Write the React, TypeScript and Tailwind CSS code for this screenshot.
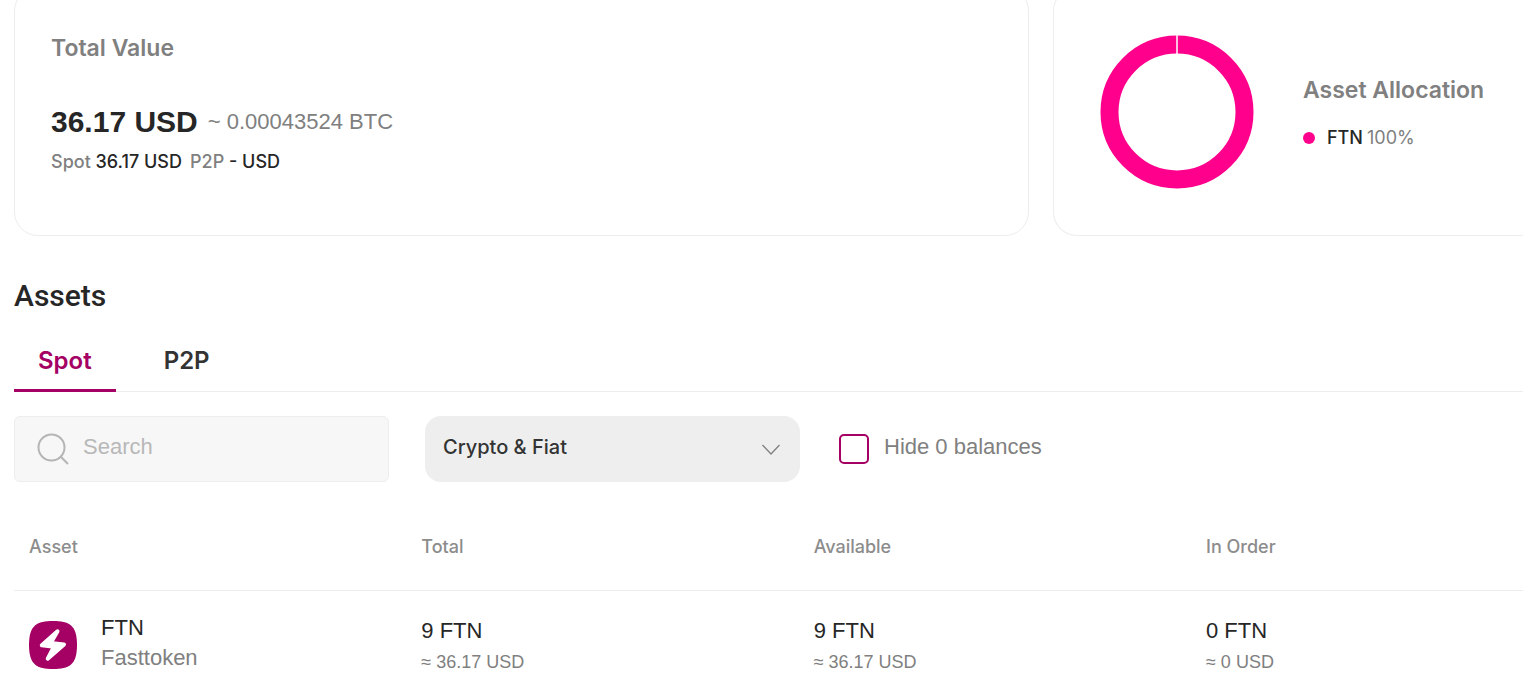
import { useState } from "react";

const BALANCES = [
  {
    symbol: "FTN",
    name: "Fasttoken",
    total: ["9 FTN", "≈ 36.17 USD"],
    available: ["9 FTN", "≈ 36.17 USD"],
    inOrder: ["0 FTN", "≈ 0 USD"],
  },
];

const TABS = ["Spot", "P2P"];

function DonutChart() {
  return (
    <svg viewBox="0 0 154 154" className="h-[154px] w-[154px] shrink-0" aria-hidden="true">
      <circle cx="77" cy="77" r="67.5" fill="none" stroke="#ff008c" strokeWidth="18" />
      <path d="M77 0v19" stroke="#ffffff" strokeWidth="1.5" />
    </svg>
  );
}

function FasttokenIcon() {
  return (
    <svg viewBox="0 0 48 48" className="h-12 w-12 shrink-0" aria-hidden="true">
      <path
        d="M24 0C40 0 48 4 48 24S40 48 24 48 0 44 0 24 8 0 24 0Z"
        fill="#a50064"
      />
      <path
        d="M28.5 10.3 L12.8 24.3 L25 25.8 L18.7 37.8 L35 23.4 L21.8 22 Z"
        fill="#fff"
        stroke="#fff"
        strokeWidth="4"
        strokeLinejoin="round"
      />
    </svg>
  );
}

function SearchIcon() {
  return (
    <svg viewBox="0 0 32 32" className="h-8 w-8 shrink-0" fill="none" stroke="#b5b5b5" strokeWidth="2" aria-hidden="true">
      <circle cx="14.5" cy="14.5" r="13" />
      <path d="m24 24 7 7" />
    </svg>
  );
}

function Amount({ value }: { value: string[] }) {
  return (
    <td className="px-[15px] pt-[25px] align-top">
      <div className="text-[22px] leading-[30px] text-[#262626]">{value[0]}</div>
      <div className="text-[18px] leading-8 text-[#808080]">{value[1]}</div>
    </td>
  );
}

export default function App() {
  const [tab, setTab] = useState("Spot");
  const [hideZero, setHideZero] = useState(false);

  return (
    <div className="overflow-hidden bg-white pl-3.5 font-['Liberation_Sans',Arial,sans-serif] text-[#262626]">
      {/* Summary cards */}
      <div className="-mt-[13px] flex gap-6">
        <section className="w-[1015px] max-w-[68%] shrink-0 rounded-3xl border border-[#ededed] px-9 pt-11 pb-[61px]">
          <h2 className="font-['Inter',sans-serif] text-[23px] leading-8 font-semibold text-[#808080]">Total Value</h2>
          <div className="mt-[38px] flex items-center gap-2.5 leading-10">
            <span className="text-[30px] font-bold">36.17 USD</span>
            <span className="text-[22px] text-[#808080]">~ 0.00043524 BTC</span>
          </div>
          <div className="mt-2 flex gap-2 font-['Inter',sans-serif] text-[18px] leading-6 font-medium">
            <span><span className="text-[#808080]">Spot</span> 36.17 USD</span>
            <span><span className="text-[#808080]">P2P</span> - USD</span>
          </div>
        </section>

        <section className="flex flex-1 items-center gap-[49px] rounded-l-3xl border border-r-0 border-[#ededed] pl-[46px]">
          <DonutChart />
          <div className="font-['Inter',sans-serif] whitespace-nowrap">
            <h2 className="text-[23px] leading-8 font-semibold text-[#808080]">Asset Allocation</h2>
            <div className="mt-5 flex items-center text-[18px] leading-6">
              <span className="mr-3 h-3 w-3 rounded-full bg-[#ff008c]" />
              <span className="font-medium">FTN</span>
              <span className="ml-1 text-[#808080]">100%</span>
            </div>
          </div>
        </section>
      </div>

      <h1 className="mt-10 font-['Roboto',sans-serif] text-[30px] leading-10 font-medium">Assets</h1>

      {/* Tabs */}
      <div className="mt-[29px] flex gap-6 border-b border-[#ededed] font-['Inter',sans-serif]">
        {TABS.map((name) => (
          <button
            key={name}
            onClick={() => setTab(name)}
            className={`-mb-px border-b-3 px-6 pb-3 text-[24px] leading-8 font-semibold ${
              tab === name ? "border-[#a50064] text-[#a50064]" : "border-transparent text-[#333333]"
            }`}
          >
            {name}
          </button>
        ))}
      </div>

      {/* Filters */}
      <div className="mt-6 flex items-center text-[22px]">
        <label className="flex h-[66px] w-[375px] items-center gap-3.5 rounded-md border border-[#ededed] bg-[#f7f7f7] pl-[22px]">
          <SearchIcon />
          <input
            type="text"
            aria-label="Search"
            placeholder="Search"
            className="min-w-0 flex-1 bg-transparent pb-1.5 outline-none placeholder:text-[#b8b8b8]"
          />
        </label>

        <div className="relative ml-9 h-[66px] w-[375px]">
          <select
            aria-label="Asset type"
            className="h-full w-full appearance-none rounded-2xl bg-[#eeeeee] px-[18px] pb-1 font-['Inter',sans-serif] text-[20px] font-medium text-[#333333]"
          >
            <option>Crypto &amp; Fiat</option>
          </select>
          <svg
            viewBox="0 0 18 12"
            className="pointer-events-none absolute top-7 right-5 h-3 w-[18px]"
            fill="none"
            stroke="#808080"
            strokeWidth="1.3"
            aria-hidden="true"
          >
            <path d="m.5 1 8.500 9L17.500 1" />
          </svg>
        </div>

        <label className="ml-[39px] flex items-center gap-[15px] text-[#808080]">
          <input
            type="checkbox"
            checked={hideZero}
            onChange={(e) => setHideZero(e.target.checked)}
            className="h-[30px] w-[30px] appearance-none rounded-[5px] border-2 border-[#a50064] checked:bg-[#a50064]"
          />
          <span className="pb-1.5">Hide 0 balances</span>
        </label>
      </div>

      {/* Balances */}
      <table className="mt-[53px] w-full table-fixed text-left">
        <thead>
          <tr className="border-b border-[#ededed] font-['Inter',sans-serif] text-[18px] leading-6 text-[#8c8c8c]">
            <th className="w-[26%] px-[15px] pb-[31px] font-medium">Asset</th>
            <th className="w-[26%] px-[15px] pb-[31px] font-medium">Total</th>
            <th className="w-[26%] px-[15px] pb-[31px] font-medium">Available</th>
            <th className="px-[15px] pb-[31px] font-medium">In Order</th>
          </tr>
        </thead>
        <tbody>
          {BALANCES.map((row) => (
            <tr key={row.symbol}>
              <td className="px-[15px] pt-[22px] align-top">
                <div className="flex h-16 items-center gap-6">
                  <FasttokenIcon />
                  <div className="self-start text-[22px] leading-[30px]">
                    <div>{row.symbol}</div>
                    <div className="text-[#808080]">{row.name}</div>
                  </div>
                </div>
              </td>
              <Amount value={row.total} />
              <Amount value={row.available} />
              <Amount value={row.inOrder} />
            </tr>
          ))}
        </tbody>
      </table>
    </div>
  );
}
